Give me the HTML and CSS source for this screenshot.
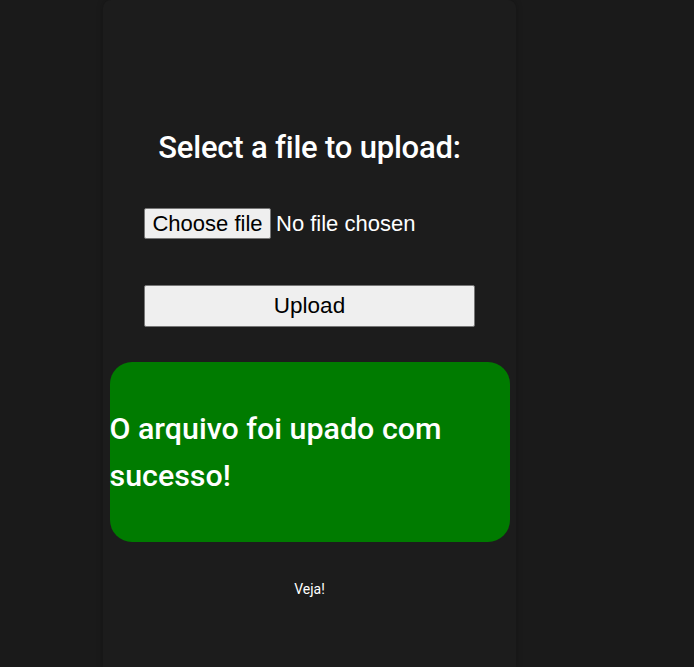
FILE: index.html
```html
<!DOCTYPE html>
<html>
<head>
<meta charset="utf-8">
<link rel="stylesheet" href="styles.css">
</head>
<body>
<main class="panel">
  <h1 class="title">Select a file to upload:</h1>
  <form class="upload-form">
    <label class="file-field">
      <input class="file-input" type="file" name="file">
      <span class="file-btn">Choose file</span>
      <span class="file-name">No file chosen</span>
    </label>
    <button class="upload-btn" type="button">Upload</button>
  </form>
  <div class="success">
    <p class="success-text">O arquivo foi upado com sucesso!</p>
  </div>
  <p class="link">Veja!</p>
</main>
</body>
</html>
```
FILE: styles.css
```css
html, body {
  margin: 0;
  padding: 0;
  height: 100%;
}
body {
  background: #1a1a1a;
  font-family: Roboto, "Noto Sans", sans-serif;
  color: #fff;
}
.panel {
  box-sizing: border-box;
  margin-left: 103px;
  width: 413px;
  min-height: 100%;
  background: #1c1c1c;
  border-radius: 8px 8px 0 0;
  box-shadow: 0 0 6px rgba(0,0,0,0.25);
  padding-top: 128px;
  display: flex;
  flex-direction: column;
  align-items: center;
}
.title {
  margin: 0;
  font-size: 31px;
  font-weight: 500;
  line-height: 40px;
  letter-spacing: -0.2px;
}
.upload-form {
  width: 331px;
  margin-top: 40px;
  display: flex;
  flex-direction: column;
  align-items: flex-start;
}
.file-field {
  display: flex;
  align-items: center;
  font-family: "Liberation Sans", Arial, sans-serif;
  font-size: 22px;
  height: 31px;
}
.file-input {
  display: none;
}
.file-btn {
  box-sizing: border-box;
  height: 31px;
  width: 127px;
  display: flex;
  align-items: center;
  justify-content: center;
  background: #efefef;
  color: #000;
  border: 1px solid #767676;
  border-radius: 2px;
}
.file-name {
  margin-left: 5px;
  color: #fff;
}
.upload-btn {
  margin-top: 46px;
  width: 331px;
  height: 42px;
  font-family: "Liberation Sans", Arial, sans-serif;
  font-size: 22.5px;
  background: #efefef;
  color: #000;
  border: 1px solid #767676;
  border-radius: 2px;
}
.success {
  box-sizing: border-box;
  margin-top: 35px;
  width: 400px;
  height: 180px;
  background: #007b00;
  border-radius: 22px;
  display: flex;
  align-items: center;
}
.success-text {
  margin: 0;
  font-size: 30.4px;
  font-weight: 500;
  line-height: 47px;
  padding-right: 50px;
}
.link {
  margin: 38px 0 0;
  font-size: 14px;
  line-height: 18px;
}
```
